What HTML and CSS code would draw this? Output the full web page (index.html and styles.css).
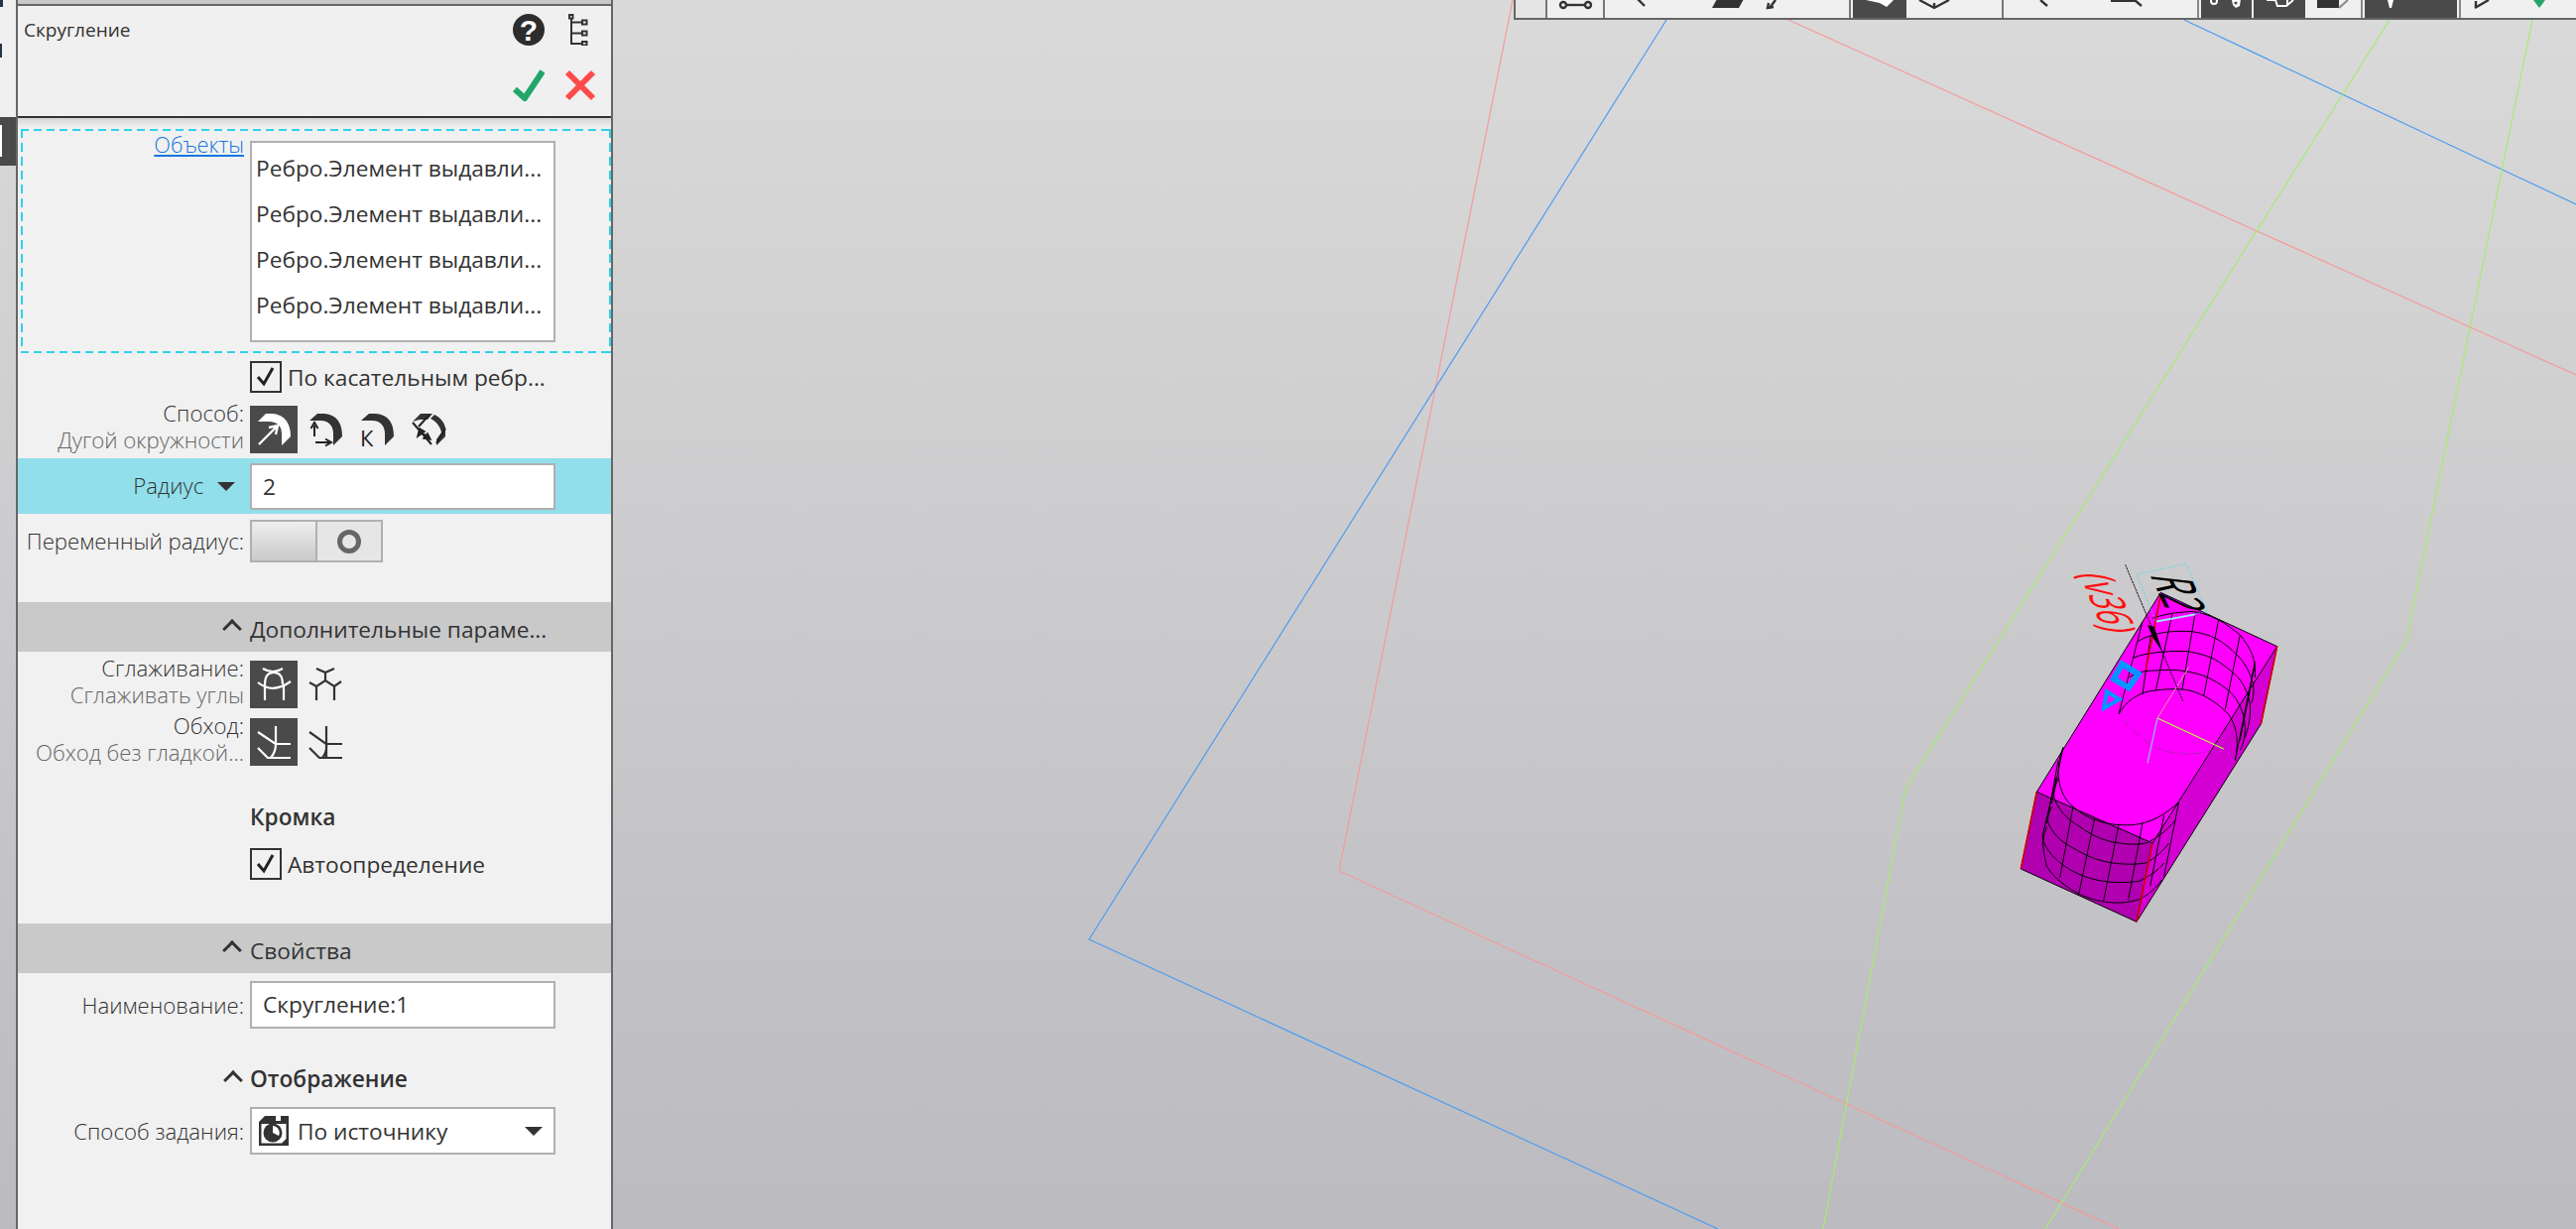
FILE: index.html
```html
<!DOCTYPE html>
<html lang="ru">
<head>
    <meta charset="UTF-8">
    <title>Скругление</title>
    <link rel="stylesheet" href="styles.css">
</head>
<body>
    <!-- 3D view: coordinates are page pixels -->
    <svg class="canvas" viewBox="0 0 2597 1239">
        <g fill="none" stroke-width="1.2">
            <path d="M1525 0 L1350 878 L2136 1239" stroke="#f59a9a"/>
            <path d="M1803 20 L2597 378" stroke="#f59a9a"/>
            <path d="M1680 20 L1098 947 L1732 1239" stroke="#4d9cf0"/>
            <path d="M2202 20 L2597 206" stroke="#4d9cf0"/>
            <path d="M2409 20 L1921 795 L1838 1239" stroke="#a4ec70"/>
            <path d="M2553 20 L2426 646 L2062 1239" stroke="#a4ec70"/>
        </g>
        <!-- part, drawn in 3x units -->
        <g transform="translate(2000 540) scale(0.33333)">
            <polygon points="535,172 887,335 510,930 160,775" fill="#ff00ff"/>
            <polygon points="887,335 838,570 462,1168 510,930" fill="#d400d4"/>
            <polygon points="160,775 510,930 462,1168 112,1008" fill="#b000b0"/>
            <g fill="none" stroke="#000" stroke-width="3">
                <path d="M535 172 L887 335 L510 930 L160 775 Z M160 775 L112 1008 L462 1168 L838 570 L887 335 M510 930 L462 1168"/>
                <!-- upper hole rings -->
                <path d="M408 540 C425 505 470 470 520 468 C550 464 575 463 600 465 C640 468 690 490 740 540 C760 570 775 610 760 680"/>
                <path d="M440 428 C465 412 490 408 520 408 C545 405 575 406 595 408 C625 412 660 420 680 430 C720 450 745 470 760 490 C780 520 790 550 790 580 C790 610 785 630 775 650"/>
                <path d="M450 370 C480 358 510 354 538 352 C565 349 590 349 615 350 C640 354 665 360 690 370 C720 385 750 410 770 430 C790 455 800 480 805 510 C808 550 800 580 790 610"/>
                <path d="M465 320 C490 305 520 296 550 292 C575 289 605 288 630 290 C655 294 680 300 700 310 C730 325 755 350 775 370 C795 395 810 425 815 450 C818 470 815 490 810 505"/>
                <path d="M510 250 C530 243 550 238 570 235 C595 231 620 230 640 230 C665 235 690 245 710 255 C735 268 755 285 775 300 C795 325 810 350 815 370 C820 390 822 410 820 430"/>
                <path d="M408 540 L480 260 M480 480 L505 300 M520 468 L570 235 M600 465 L640 230 M665 485 L710 255 M730 525 L775 300 M775 620 L820 390 M760 680 L820 380"/>
                <!-- lower hole rings -->
                <path d="M240 640 C215 700 220 780 270 820 C310 855 365 875 420 875 C490 880 550 845 590 805"/>
                <path d="M225 735 C210 770 210 785 215 800 C235 845 265 865 290 880 C330 910 370 925 410 930 C440 935 465 935 490 930 C525 915 555 890 580 860"/>
                <path d="M205 820 C195 840 192 855 195 870 C215 915 250 935 280 950 C315 972 355 985 390 990 C425 995 460 995 490 990 C520 975 540 955 560 930"/>
                <path d="M190 880 C183 900 180 912 180 925 C200 970 230 990 260 1010 C295 1030 330 1040 360 1045 C395 1050 435 1050 470 1045 C500 1030 525 1015 545 990"/>
                <path d="M220 730 L178 905 C178 950 185 975 190 1000 C215 1040 255 1065 290 1085 C325 1100 355 1108 390 1110 C420 1112 445 1108 470 1100 C500 1085 520 1065 540 1040"/>
                <path d="M240 640 L205 810 M225 680 L190 870 M270 820 L230 1035 M335 855 L287 1085 M408 875 L362 1105 M480 870 L437 1102 M545 845 L503 1060 M590 805 L545 1030"/>
            </g>
            <g stroke="#d40000" stroke-width="5" fill="none">
                <path d="M160 775 L112 1008 M510 930 L462 1168 M887 335 L838 570 M535 180 L490 405"/>
            </g>
            <path d="M425 560 C450 590 480 615 520 640 C550 655 590 660 620 660 C660 660 690 650 710 640 C730 632 745 622 760 610" fill="none" stroke="#7a3a7a" stroke-width="2" stroke-dasharray="24 6 4 6"/>
            <path d="M525 552 L725 645" stroke="#b0ff30" stroke-width="4"/>
            <path d="M525 552 L495 688" stroke="#a0a8ff" stroke-width="4"/>
            <path d="M525 552 L620 398" stroke="#f09aa0" stroke-width="3"/>
            <path d="M428 88 L603 502" stroke="#111" stroke-width="3" stroke-dasharray="7 2"/>
            <polygon points="495,270 515,275 540,350 512,310" fill="#000"/>
            <path d="M462 117 L612 85 L675 230 L520 258 Z" fill="none" stroke="#22e0f0" stroke-width="2" stroke-dasharray="5 4"/>
            <path d="M522 260 L640 238" stroke="#a0f0ff" stroke-width="5"/>
            <polygon points="418,388 467,418 438,460 393,433" fill="none" stroke="#0096ff" stroke-width="18"/>
            <polygon points="372,472 410,495 363,522" fill="none" stroke="#0096ff" stroke-width="12"/>
            <text class="dim-black" transform="matrix(.42 .9 -1.78 -.2 500 115)">R2</text>
            <text class="dim-red" transform="matrix(.33 .8 -1.45 -.1 288 112)">(v36)</text>
        </g>
    </svg>

    <div class="rail">
        <span class="rail-glyph rail-glyph-a"></span>
        <span class="rail-glyph rail-glyph-b"></span>
        <div class="rail-tab"><span class="rail-tab-mark"></span></div>
    </div>

    <div class="panel">
        <div class="panel-cap"></div>
        <div class="panel-head">
            <div class="panel-title">Скругление</div>
            <div class="head-icons">
                <span class="help-icon">?</span>
                <svg class="tree-icon" viewBox="0 0 20 32">
                    <g fill="none" stroke="#333" stroke-width="2">
                        <rect x="1" y="1" width="3.5" height="3.5"/>
                        <path d="M3 5 V30 H14 M3 8.5 H14 M3 19.5 H14"/>
                        <rect x="14" y="6.5" width="4.5" height="4"/>
                        <rect x="14" y="17.5" width="4.5" height="4"/>
                        <rect x="14" y="28" width="4.5" height="3.5"/>
                    </g>
                </svg>
                <svg class="ok-icon" viewBox="0 0 32 32"><path d="M2 20 L12 29 L30 2" fill="none" stroke="#23a56a" stroke-width="6"/></svg>
                <svg class="cancel-icon" viewBox="0 0 32 32"><path d="M3 3 L29 29 M29 3 L3 29" fill="none" stroke="#ff4b4b" stroke-width="6"/></svg>
            </div>
        </div>
        <div class="panel-body">
            <div class="objects">
                <a class="link-label">Объекты</a>
                <div class="listbox">
                    <div class="listbox-item">Ребро.Элемент выдавли...</div>
                    <div class="listbox-item">Ребро.Элемент выдавли...</div>
                    <div class="listbox-item">Ребро.Элемент выдавли...</div>
                    <div class="listbox-item">Ребро.Элемент выдавли...</div>
                </div>
            </div>

            <div class="row row-tangent">
                <div></div>
                <label class="check">
                    <span class="check-box"><svg viewBox="0 0 28 28"><path d="M6 14 L12 21 L21 5" fill="none" stroke="#222" stroke-width="3"/></svg></span>
                    По касательным ребр...
                </label>
            </div>

            <div class="row row-method">
                <div class="label-stack">
                    <div>Способ:</div>
                    <div class="label-sub">Дугой окружности</div>
                </div>
                <div class="icon-row">
                    <span class="icon-btn active">
                        <svg viewBox="0 0 48 48">
                            <path d="M8 16 L16 8 H23 C35 9 41 18 41 31 L32 40 V28 C32 21 28 16 19 16 Z" fill="#fff"/>
                            <path d="M9 39 L27 21 M19 22 L28 20 L26 29" fill="none" stroke="#fff" stroke-width="2.4"/>
                        </svg>
                    </span>
                    <span class="icon-btn">
                        <svg viewBox="0 0 48 48">
                            <path d="M8 15 L16 8 H23 C36 9 41 18 41 31 L32 40 V28 C32 21 28 15 19 15 Z" fill="#333"/>
                            <path d="M13 31 V20 M9.5 23 L13 17 L16.5 23 M14 37 H28 M24 33.5 L30 37 L24 40.5" fill="none" stroke="#222" stroke-width="2"/>
                        </svg>
                    </span>
                    <span class="icon-btn">
                        <svg viewBox="0 0 48 48">
                            <path d="M8 15 L16 8 H23 C36 9 41 18 41 31 L32 40 V28 C32 21 28 15 19 15 Z" fill="#333"/>
                            <text class="icon-letter" x="7" y="41">К</text>
                        </svg>
                    </span>
                    <span class="icon-btn">
                        <svg viewBox="0 0 48 48">
                            <path d="M8 16 L16 8 H28 L23 14 H15 Z M30 9 C36 12 40 17 41 22 V31 L32 40 V34 L37 27 C36 21 31 15 26 13 Z" fill="#333"/>
                            <path d="M8 17 L27 39 M14 21 L25 9 M32 38 L41 23" fill="none" stroke="#222" stroke-width="2"/>
                            <path d="M14 24 L25 33 M13 31 L15 23 L20 26 Z M26 34 L19 33 L23 28 Z" fill="#222" stroke="#222" stroke-width="1.6"/>
                        </svg>
                    </span>
                </div>
            </div>

            <div class="row row-radius">
                <div class="label label-radius">Радиус <span class="caret"></span></div>
                <div class="field">2</div>
            </div>

            <div class="row row-variable">
                <div class="label">Переменный радиус:</div>
                <div class="toggle">
                    <span class="toggle-off"></span>
                    <span class="toggle-on"><span class="toggle-ring"></span></span>
                </div>
            </div>

            <div class="section-bar section-extra">
                <span class="chevron"></span><span class="section-text">Дополнительные параме...</span>
            </div>

            <div class="row row-smooth">
                <div class="label-stack">
                    <div>Сглаживание:</div>
                    <div class="label-sub">Сглаживать углы</div>
                </div>
                <div class="icon-row">
                    <span class="icon-btn active">
                        <svg viewBox="0 0 48 48">
                            <path d="M13 8 Q23 14 33 8 M15 24 Q15 12 24 12 Q33 12 33 24 M8 22 Q23 34 41 21 M15 24 V40 M34 24 V40" fill="none" stroke="#fff" stroke-width="2.2"/>
                        </svg>
                    </span>
                    <span class="icon-btn">
                        <svg viewBox="0 0 48 48">
                            <path d="M15 8 L24 12 L33 8 M24 12 V21 M8 22 L15 26 L24 20 L33 26 L40 21 M15 26 V40 M33 26 V40" fill="none" stroke="#333" stroke-width="2.2"/>
                        </svg>
                    </span>
                </div>
            </div>

            <div class="row row-bypass">
                <div class="label-stack">
                    <div>Обход:</div>
                    <div class="label-sub">Обход без гладкой...</div>
                </div>
                <div class="icon-row">
                    <span class="icon-btn active">
                        <svg viewBox="0 0 48 48">
                            <path d="M26 8 V26 H41 M8 14 L26 26 Q26 34 21 40 M8 30 L18 40 H41" fill="none" stroke="#fff" stroke-width="2.2"/>
                        </svg>
                    </span>
                    <span class="icon-btn">
                        <svg viewBox="0 0 48 48">
                            <path d="M25 8 V40 M25 26 H41 M8 14 L25 26 Q26 34 21 40 M8 30 L18 40 H41" fill="none" stroke="#333" stroke-width="2.2"/>
                        </svg>
                    </span>
                </div>
            </div>

            <div class="row row-edge">
                <div></div>
                <div class="heading">Кромка</div>
            </div>

            <div class="row row-auto">
                <div></div>
                <label class="check">
                    <span class="check-box"><svg viewBox="0 0 28 28"><path d="M6 14 L12 21 L21 5" fill="none" stroke="#222" stroke-width="3"/></svg></span>
                    Автоопределение
                </label>
            </div>

            <div class="section-bar section-props">
                <span class="chevron"></span><span class="section-text">Свойства</span>
            </div>

            <div class="row row-name">
                <div class="label">Наименование:</div>
                <div class="field">Скругление:1</div>
            </div>

            <div class="row row-display">
                <div class="heading-chevron"><span class="chevron"></span></div>
                <div class="heading">Отображение</div>
            </div>

            <div class="row row-mode">
                <div class="label">Способ задания:</div>
                <div class="field field-combo">
                    <svg class="combo-icon" viewBox="0 0 32 32">
                        <path d="M1 31 V7 L7 1 H18 V6 H23 V1 H31 V31 Z" fill="#333"/>
                        <path d="M3.5 9 H28.5 V24 L24 28.5 H3.5 Z" fill="#fff"/>
                        <circle cx="15" cy="18" r="9.5" fill="#333"/>
                        <path d="M15 18 V11 A7 7 0 0 1 21 21 Z" fill="#fff"/>
                    </svg>
                    <span class="combo-text">По источнику</span>
                    <span class="caret caret-combo"></span>
                </div>
            </div>
        </div>
    </div>

    <div class="toolbar">
        <div class="tool-cell tool-a"></div>
        <div class="tool-cell tool-b"></div>
        <div class="tool-cell tool-c"></div>
        <div class="tool-cell tool-dark tool-d"></div>
        <div class="tool-cell tool-e"></div>
        <div class="tool-cell tool-f"></div>
        <div class="tool-cell tool-dark tool-g"></div>
        <div class="tool-cell tool-dark tool-h"></div>
        <div class="tool-cell tool-i"></div>
        <div class="tool-cell tool-dark tool-j"></div>
        <div class="tool-cell tool-k"></div>
        <!-- bottoms of the toolbar icons, the rest is cut off by the screen -->
        <svg class="tool-icons" viewBox="0 0 1071 18">
            <g fill="none" stroke="#333" stroke-width="2.4">
                <circle cx="50" cy="5" r="3"/><circle cx="75" cy="5" r="3"/><path d="M53 5 H72"/>
                <path d="M124 -2 L132 6"/>
                <path d="M258 8 L264 0 M257 3 L256 8 L262 7"/>
                <path d="M409 0 L424 8 L439 0 M424 8 V3"/>
                <path d="M531 0 L538 6"/>
            </g>
            <polygon points="200,8 227,8 232,-1 205,-1" fill="#333"/>
            <path d="M355 0 L383 0 L376 7 L369 3 Z M369 0 V7" fill="#fff"/>
            <rect x="602" y="0" width="24" height="2" fill="#333"/>
            <path d="M626 0 L633 6" stroke="#333" stroke-width="2.4"/>
            <circle cx="706" cy="1" r="3" fill="none" stroke="#fff" stroke-width="2"/>
            <path d="M724 0 L733 -1 L732 6 L728 8 L725 5 Z" fill="#fff"/>
            <circle cx="728" cy="3" r="1.6" fill="#4a4a4a"/>
            <path d="M759 0 H768 L770 6 H779 L786 0" fill="none" stroke="#fff" stroke-width="2"/>
            <path d="M780 0 V6" stroke="#fff" stroke-width="2"/>
            <rect x="810" y="0" width="22" height="8" fill="#333"/>
            <path d="M832 8 L841 0" stroke="#888" stroke-width="2"/>
            <path d="M881 0 L883 8 H885 L887 0 Z" fill="#fff"/>
            <path d="M969 8 L983 0 M970 1 V8" fill="none" stroke="#333" stroke-width="2.4"/>
            <polygon points="1028,0 1040,0 1034,8" fill="#23a56a"/>
        </svg>
    </div>
</body>
</html>
```

FILE: styles.css
```css
* {
    box-sizing: border-box;
}
body {
    margin: 0;
    width: 2597px;
    height: 1239px;
    overflow: hidden;
    position: relative;
    display: flex;
    align-items: stretch;
    font-family: "Open Sans", "Noto Sans", sans-serif;
    font-size: 22.7px;
    color: #333;
    background: linear-gradient(#dadada, #bbbbc0);
}
.canvas {
    position: absolute;
    left: 0;
    top: 0;
    width: 2597px;
    height: 1239px;
}
.dim-black {
    font-family: "Open Sans", sans-serif;
    font-size: 100px;
    fill: #000;
}
.dim-red {
    font-family: "Open Sans", sans-serif;
    font-size: 100px;
    fill: #ff1010;
}

/* left strip */
.rail {
    position: relative;
    width: 16px;
    flex: none;
}
.rail::before {
    content: "";
    display: block;
    height: 118px;
    background-color: #f0f0f0;
}
.rail-tab {
    height: 49px;
    background-color: #4a4a4a;
    padding-top: 8px;
}
.rail-tab-mark {
    display: block;
    width: 2px;
    height: 32px;
    background-color: #fff;
}
.rail-glyph {
    position: absolute;
    left: 0;
    background-color: #26324a;
}
.rail-glyph-a {
    top: 0;
    width: 3px;
    height: 7px;
}
.rail-glyph-b {
    top: 44px;
    width: 2px;
    height: 14px;
}

/* property panel */
.panel {
    position: relative;
    width: 602px;
    flex: none;
    display: flex;
    flex-direction: column;
    border-left: 2px solid #666;
    border-right: 2px solid #666;
    background-color: #f1f1f1;
}
.panel-cap {
    height: 6px;
    background-color: #c8c8c8;
    border-bottom: 2px solid #666;
}
.panel-head {
    height: 113px;
    display: flex;
    justify-content: space-between;
    background-color: #f0f0f0;
    border-bottom: 2px solid #333;
    padding: 0 15px 0 6px;
}
.panel-title {
    margin-top: 11px;
    font-size: 19px;
    line-height: 26px;
}
.head-icons {
    display: grid;
    grid-template-columns: 32px 32px;
    column-gap: 20px;
    grid-template-rows: 32px 32px;
    row-gap: 24px;
    margin-top: 8px;
}
.help-icon {
    width: 32px;
    height: 32px;
    border-radius: 50%;
    background-color: #2d2d2d;
    color: #fff;
    font-family: "Liberation Sans", sans-serif;
    font-weight: 700;
    font-size: 30px;
    line-height: 33px;
    text-align: center;
}
.tree-icon {
    width: 20px;
    height: 32px;
    margin-left: 4px;
}
.ok-icon,
.cancel-icon {
    width: 32px;
    height: 32px;
}
.panel-body {
    flex: 1;
    background: linear-gradient(#d6d6d6, #f1f1f1 10px);
    padding-top: 11px;
}
.objects {
    height: 226px;
    margin: 0 0 0 3px;
    padding: 12px 0 0 2px;
    display: grid;
    grid-template-columns: 223px 308px;
    column-gap: 6px;
    align-items: start;
    background:
        repeating-linear-gradient(90deg, #2ed3ea 0 8px, transparent 8px 13px) top / 100% 2px no-repeat,
        repeating-linear-gradient(90deg, #2ed3ea 0 8px, transparent 8px 13px) bottom / 100% 2px no-repeat,
        repeating-linear-gradient(180deg, #2ed3ea 0 9px, transparent 9px 14px) left / 2px 100% no-repeat,
        repeating-linear-gradient(180deg, #2ed3ea 0 9px, transparent 9px 14px) right / 2px 100% no-repeat;
}
.link-label {
    color: #1577e0;
    text-decoration: underline;
    text-align: right;
    font-weight: 300;
    font-size: 21.8px;
    line-height: 24px;
    margin-top: -8px;
}
.listbox {
    height: 203px;
    border: 2px solid #b0b0b0;
    background-color: #fff;
    padding: 3px 0 0 4px;
}
.listbox-item {
    height: 46px;
    line-height: 46px;
    white-space: nowrap;
}

/* label / control rows */
.row {
    display: grid;
    grid-template-columns: 228px 308px;
    column-gap: 6px;
    align-items: center;
}
.label {
    font-size: 22.2px;
    font-weight: 300;
    text-align: right;
    white-space: nowrap;
}
.label-stack {
    font-size: 22.2px;
    font-weight: 300;
    text-align: right;
    line-height: 27px;
    white-space: nowrap;
    margin-top: -6px;
}
.label-sub {
    color: #666;
}
.field {
    height: 47px;
    line-height: 43px;
    border: 2px solid #b0b0b0;
    background-color: #fff;
    padding-left: 11px;
}
.check {
    display: flex;
    align-items: center;
    gap: 6px;
    white-space: nowrap;
}
.check-box {
    width: 32px;
    height: 32px;
    flex: none;
    border: 2px solid #333;
}
.check-box svg {
    display: block;
    width: 28px;
    height: 28px;
}
.icon-row {
    display: flex;
    gap: 4px;
}
.icon-btn {
    width: 48px;
    height: 48px;
}
.icon-btn svg {
    display: block;
    width: 48px;
    height: 48px;
}
.icon-btn.active {
    background-color: #4a4a4a;
}
.icon-letter {
    font-size: 22px;
    fill: #222;
}
.row-tangent {
    margin-top: 8px;
}
.row-method {
    margin-top: 13px;
}
.row-radius {
    margin-top: 5px;
    height: 56px;
    background-color: #91dfeb;
}
.label-radius {
    padding-right: 9px;
    margin-top: -2px;
}
.caret {
    display: inline-block;
    width: 0;
    height: 0;
    margin-left: 8px;
    vertical-align: 3px;
    border-left: 9px solid transparent;
    border-right: 9px solid transparent;
    border-top: 9px solid #333;
}
.row-variable {
    margin-top: 6px;
}
.toggle {
    width: 134px;
    height: 43px;
    display: flex;
    border: 2px solid #b0b0b0;
}
.toggle-off {
    width: 66px;
    background: linear-gradient(#eeeeee, #c9c9c9);
    border-right: 2px solid #b0b0b0;
}
.toggle-on {
    flex: 1;
    display: flex;
    align-items: center;
    justify-content: center;
    background-color: #e6e6e6;
}
.toggle-ring {
    width: 24px;
    height: 24px;
    border: 5px solid #666;
    border-radius: 50%;
}
.section-bar {
    height: 50px;
    background-color: #c9c9c9;
    display: flex;
    align-items: center;
    padding: 4px 0 0 209px;
}
.chevron {
    display: inline-block;
    width: 14px;
    height: 14px;
    border-left: 3px solid #333;
    border-top: 3px solid #333;
    transform: rotate(45deg);
}
.section-text {
    margin-left: 11px;
    white-space: nowrap;
}
.section-extra {
    margin-top: 40px;
}
.row-smooth {
    margin-top: 9px;
}
.row-bypass {
    margin-top: 10px;
}
.heading {
    font-weight: 600;
    line-height: 30px;
}
.heading-chevron {
    text-align: right;
    padding-right: 4px;
}
.row-edge {
    margin-top: 37px;
}
.row-auto {
    margin-top: 16px;
}
.section-props {
    margin-top: 44px;
}
.row-name {
    margin-top: 8px;
}
.row-name .field {
    height: 48px;
}
.row-display {
    margin-top: 35px;
}
.row-mode {
    margin-top: 13px;
}
.field-combo {
    height: 48px;
    display: flex;
    align-items: center;
    padding: 0 11px 0 6px;
}
.combo-icon {
    width: 32px;
    height: 32px;
    flex: none;
}
.combo-text {
    flex: 1;
    margin-left: 8px;
}
.caret-combo {
    margin: 0;
}

/* top toolbar, cut by the screen edge */
.toolbar {
    position: absolute;
    left: 1526px;
    right: 0;
    top: 0;
    height: 20px;
    display: flex;
    border-left: 2px solid #666;
    border-bottom: 2px solid #666;
    background-color: #f0f0f0;
}
.tool-cell {
    flex: none;
    height: 18px;
    border-right: 2px solid #777;
}
.tool-dark {
    background-color: #4a4a4a;
}
.tool-a {
    width: 32px;
    background-color: #e4e4e4;
}
.tool-b {
    width: 58px;
}
.tool-c {
    width: 248px;
}
.tool-d {
    width: 56px;
    border-left: 2px solid #f0f0f0;
    border-right: none;
}
.tool-e {
    width: 98px;
}
.tool-f {
    width: 197px;
    border-right: 2px solid #888;
}
.tool-g {
    width: 55px;
    border-left: 2px solid #f0f0f0;
    border-right: 2px solid #f0f0f0;
}
.tool-h {
    width: 52px;
    border-right: none;
}
.tool-i {
    width: 58px;
    border-right: 2px solid #888;
}
.tool-j {
    width: 97px;
    border-left: 2px solid #f0f0f0;
    border-right: 2px solid #f0f0f0;
}
.tool-k {
    flex: 1;
    border-left: 2px solid #888;
    border-right: none;
}
.tool-icons {
    position: absolute;
    left: -2px;
    top: 0;
    width: 1071px;
    height: 18px;
}
```
